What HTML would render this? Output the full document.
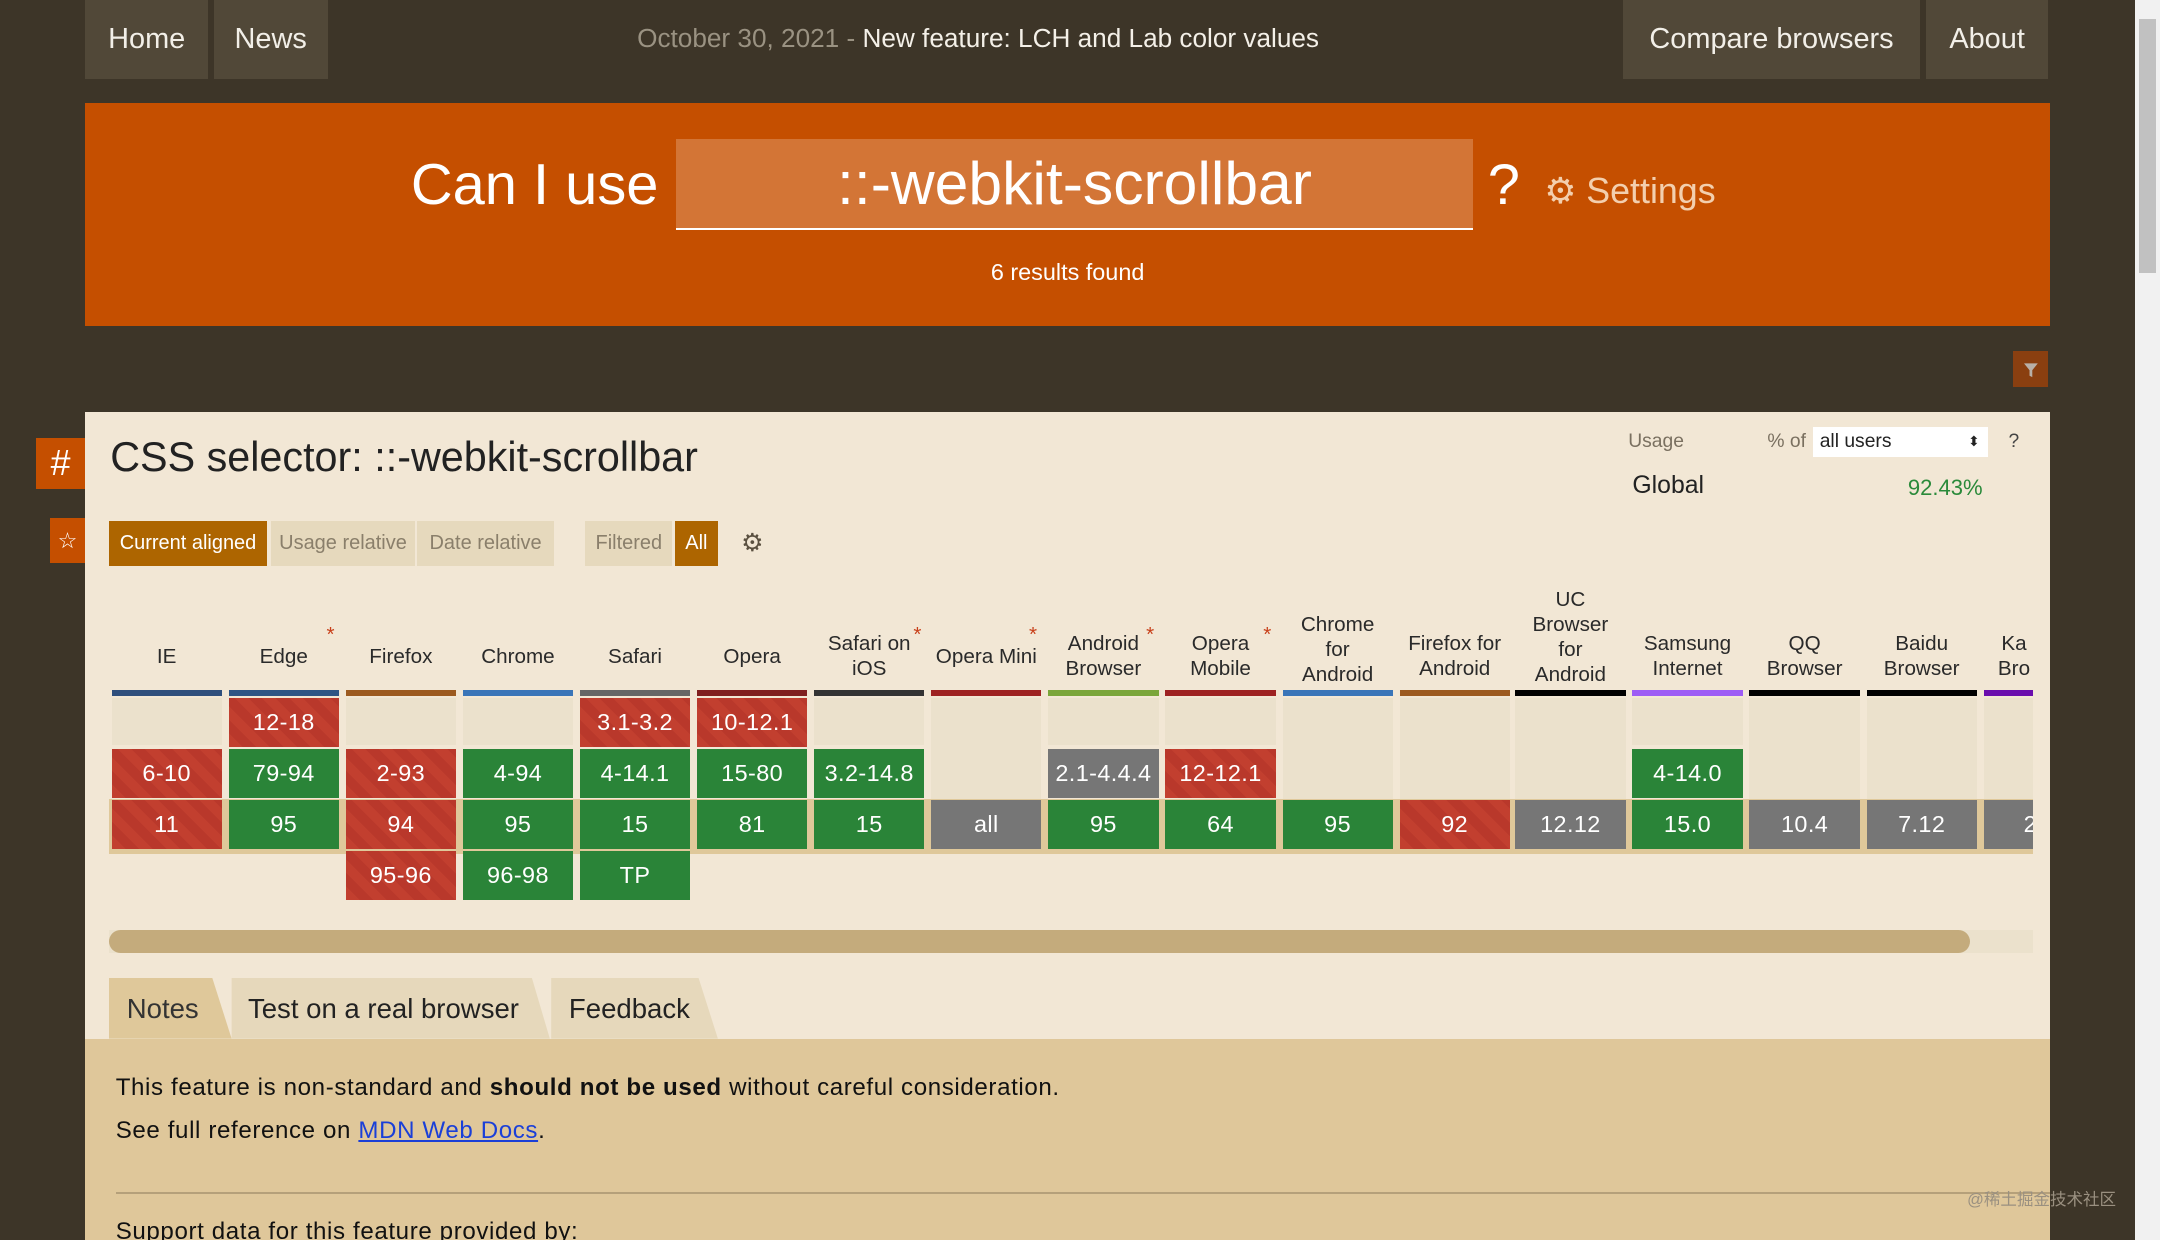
<!DOCTYPE html>
<html><head><meta charset="utf-8">
<style>
*{margin:0;padding:0;box-sizing:border-box}
html,body{width:2160px;height:1240px;overflow:hidden;background:#3e3629}
#w{zoom:1.377551;width:1568px;height:900px;position:relative;overflow:hidden;background:#3d3528;font-family:"Liberation Sans",sans-serif}
.a{position:absolute}
.nav{position:absolute;top:0;height:57px;background:#514838;color:#f2efe8;font-size:21px;line-height:57px;text-align:center}
.c{position:absolute;width:80px;height:35px;color:#fff;font-size:17px;line-height:35px;text-align:center;letter-spacing:.3px}
.r{background:#c23f2f repeating-linear-gradient(45deg,#c23f2f 0 7px,#b9382b 7px 14px)}
.g{background:#2a8438}
.y{background:#767676}
.e{position:absolute;width:80px;background:#ebe1cc}
.h{position:absolute;width:84px;text-align:center;font-size:15px;line-height:18px;color:#2a2a2a}
.bar{position:absolute;top:501px;width:80px;height:4px}
.st{color:#c8401a;font-size:15px;position:absolute}
.btn{position:absolute;top:378px;height:33px;line-height:33px;font-size:14.5px;text-align:center}
</style></head><body><div id="w">
<div class="a" style="right:0;top:0;width:18px;height:900px;background:#f1f1f1"></div>
<div class="a" style="right:3px;top:14px;width:12px;height:184px;background:#c1c1c1"></div>

<div class="nav" style="left:62px;width:89px">Home</div>
<div class="nav" style="left:155px;width:83px">News</div>
<div class="nav" style="left:1178px;width:216px">Compare browsers</div>
<div class="nav" style="left:1398px;width:89px">About</div>
<div class="a" style="left:0;width:1420px;text-align:center;top:17px;font-size:19px;color:#9a9282">October 30, 2021 - <span style="color:#f4f0e8">New feature: LCH and Lab color values</span></div>

<div class="a" style="left:62px;top:75px;width:1426px;height:162px;background:#c54f00"></div>
<div class="a" style="left:200px;width:278px;text-align:right;top:110px;font-size:42px;color:#fff">Can I use</div>
<div class="a" style="left:491px;top:101px;width:578px;height:66px;background:#d37536;border-bottom:2px solid #fff;color:#fff;font-size:44px;text-align:center;line-height:64px">::-webkit-scrollbar</div>
<div class="a" style="left:1080px;top:110px;font-size:42px;color:#fff">?</div>
<div class="a" style="left:1121px;top:124px;font-size:26px;color:#f3cfae">⚙ Settings</div>
<div class="a" style="left:0;width:1550px;text-align:center;top:188px;font-size:17px;color:#fff">6 results found</div>

<div class="a" style="left:1461px;top:255px;width:26px;height:26px;background:#8a3f10"><svg width="26" height="26"><path d="M8 9h10l-4 5v5l-2-1v-4z" fill="#b8b0a8"/></svg></div>

<div class="a" style="left:62px;top:299px;width:1426px;height:601px;background:#f2e7d5"></div>
<div class="a" style="left:26px;top:318px;width:36px;height:37px;background:#c54f00;color:#fff;font-size:26px;text-align:center;line-height:37px">#</div>
<div class="a" style="left:36px;top:376px;width:26px;height:33px;background:#c54f00;color:#fff;font-size:16px;text-align:center;line-height:33px">☆</div>
<div class="a" style="left:80px;top:315px;font-size:30px;color:#222">CSS selector: ::-webkit-scrollbar</div>

<div class="btn" style="left:79px;width:115px;background:#ad6500;color:#fff">Current aligned</div>
<div class="btn" style="left:197px;width:104px;background:#e6d9bd;color:#8a7f6b">Usage relative</div>
<div class="btn" style="left:303px;width:99px;background:#e6d9bd;color:#8a7f6b">Date relative</div>
<div class="btn" style="left:425px;width:63px;background:#e6d9bd;color:#8a7f6b">Filtered</div>
<div class="btn" style="left:490px;width:31px;background:#ad6500;color:#fff">All</div>
<div class="a" style="left:538px;top:383px;font-size:18px;color:#5a5040">⚙</div>

<div class="a" style="left:1182px;top:313px;font-size:14px;color:#7a7060">Usage</div>
<div class="a" style="left:1283px;top:313px;font-size:14px;color:#7a7060">% of</div>
<div class="a" style="left:1316px;top:310px;width:127px;height:22px;background:#fff;font-size:14px;line-height:22px;padding-left:5px;color:#222">all users<span style="position:absolute;right:6px;font-size:10px">⬍</span></div>
<div class="a" style="left:1458px;top:313px;font-size:14px;color:#444">?</div>
<div class="a" style="left:1185px;top:343px;font-size:18px;color:#222">Global</div>
<div class="a" style="left:1385px;top:345px;font-size:16px;color:#2a8a3a">92.43%</div>

<!-- headers -->
<div class="h" style="left:79px;top:468px">IE</div>
<div class="h" style="left:164px;top:468px">Edge</div><span class="st" style="left:237px;top:452px">*</span>
<div class="h" style="left:249px;top:468px">Firefox</div>
<div class="h" style="left:334px;top:468px">Chrome</div>
<div class="h" style="left:419px;top:468px">Safari</div>
<div class="h" style="left:504px;top:468px">Opera</div>
<div class="h" style="left:589px;top:459px">Safari on<br>iOS</div><span class="st" style="left:663px;top:452px">*</span>
<div class="h" style="left:674px;top:468px">Opera Mini</div><span class="st" style="left:747px;top:452px">*</span>
<div class="h" style="left:759px;top:459px">Android<br>Browser</div><span class="st" style="left:832px;top:452px">*</span>
<div class="h" style="left:844px;top:459px">Opera<br>Mobile</div><span class="st" style="left:917px;top:452px">*</span>
<div class="h" style="left:929px;top:445px">Chrome<br>for<br>Android</div>
<div class="h" style="left:1014px;top:459px">Firefox for<br>Android</div>
<div class="h" style="left:1098px;top:427px">UC<br>Browser<br>for<br>Android</div>
<div class="h" style="left:1183px;top:459px">Samsung<br>Internet</div>
<div class="h" style="left:1268px;top:459px">QQ<br>Browser</div>
<div class="h" style="left:1353px;top:459px">Baidu<br>Browser</div>
<div class="a" style="left:1440px;top:459px;width:36px;overflow:hidden;font-size:15px;line-height:18px;color:#2a2a2a;text-align:center;white-space:nowrap"><div style="width:80px;margin-left:-18px">Ka<br>Bro</div></div>

<div class="bar" style="left:81px;background:#2f4f7c"></div>
<div class="bar" style="left:166px;background:#2f5584"></div>
<div class="bar" style="left:251px;background:#9c5a1f"></div>
<div class="bar" style="left:336px;background:#3a75b8"></div>
<div class="bar" style="left:421px;background:#666"></div>
<div class="bar" style="left:506px;background:#801f1f"></div>
<div class="bar" style="left:591px;background:#333"></div>
<div class="bar" style="left:676px;background:#9e2222"></div>
<div class="bar" style="left:761px;background:#7aa53a"></div>
<div class="bar" style="left:846px;background:#9e2222"></div>
<div class="bar" style="left:931px;background:#3a75b8"></div>
<div class="bar" style="left:1016px;background:#9c5a1f"></div>
<div class="bar" style="left:1100px;background:#000"></div>
<div class="bar" style="left:1185px;background:#9d5cf5"></div>
<div class="bar" style="left:1270px;background:#000"></div>
<div class="bar" style="left:1355px;background:#000"></div>
<div class="bar" style="left:1440px;width:36px;background:#6a0dad"></div>

<div class="a" style="left:79px;top:580px;width:1397px;height:40px;background:#dfc89a"></div>

<!-- empty cells -->
<div class="e" style="left:81px;top:507px;height:34px"></div>
<div class="e" style="left:251px;top:507px;height:34px"></div>
<div class="e" style="left:336px;top:507px;height:34px"></div>
<div class="e" style="left:591px;top:507px;height:34px"></div>
<div class="e" style="left:676px;top:507px;height:73px"></div>
<div class="e" style="left:761px;top:507px;height:34px"></div>
<div class="e" style="left:846px;top:507px;height:34px"></div>
<div class="e" style="left:931px;top:507px;height:73px"></div>
<div class="e" style="left:1016px;top:507px;height:73px"></div>
<div class="e" style="left:1100px;top:507px;height:73px"></div>
<div class="e" style="left:1185px;top:507px;height:34px"></div>
<div class="e" style="left:1270px;top:507px;height:73px"></div>
<div class="e" style="left:1355px;top:507px;height:73px"></div>
<div class="e" style="left:1440px;top:507px;height:73px;width:36px"></div>

<!-- row1 -->
<div class="c r" style="left:166px;top:507px">12-18</div>
<div class="c r" style="left:421px;top:507px">3.1-3.2</div>
<div class="c r" style="left:506px;top:507px">10-12.1</div>
<!-- row2 -->
<div class="c r" style="left:81px;top:544px">6-10</div>
<div class="c g" style="left:166px;top:544px">79-94</div>
<div class="c r" style="left:251px;top:544px">2-93</div>
<div class="c g" style="left:336px;top:544px">4-94</div>
<div class="c g" style="left:421px;top:544px">4-14.1</div>
<div class="c g" style="left:506px;top:544px">15-80</div>
<div class="c g" style="left:591px;top:544px">3.2-14.8</div>
<div class="c y" style="left:761px;top:544px">2.1-4.4.4</div>
<div class="c r" style="left:846px;top:544px">12-12.1</div>
<div class="c g" style="left:1185px;top:544px">4-14.0</div>
<!-- current -->
<div class="c r" style="left:81px;top:581px">11</div>
<div class="c g" style="left:166px;top:581px">95</div>
<div class="c r" style="left:251px;top:581px">94</div>
<div class="c g" style="left:336px;top:581px">95</div>
<div class="c g" style="left:421px;top:581px">15</div>
<div class="c g" style="left:506px;top:581px">81</div>
<div class="c g" style="left:591px;top:581px">15</div>
<div class="c y" style="left:676px;top:581px">all</div>
<div class="c g" style="left:761px;top:581px">95</div>
<div class="c g" style="left:846px;top:581px">64</div>
<div class="c g" style="left:931px;top:581px">95</div>
<div class="c r" style="left:1016px;top:581px">92</div>
<div class="c y" style="left:1100px;top:581px">12.12</div>
<div class="c g" style="left:1185px;top:581px">15.0</div>
<div class="c y" style="left:1270px;top:581px">10.4</div>
<div class="c y" style="left:1355px;top:581px">7.12</div>
<div class="c y" style="left:1440px;top:581px;width:36px;text-align:left;padding-left:29px;overflow:hidden">2</div>
<!-- future -->
<div class="c r" style="left:251px;top:618px">95-96</div>
<div class="c g" style="left:336px;top:618px">96-98</div>
<div class="c g" style="left:421px;top:618px">TP</div>

<div class="a" style="left:79px;top:675px;width:1397px;height:17px;background:#ebe1cc"></div>
<div class="a" style="left:79px;top:675px;width:1351px;height:17px;background:#c4ab7c;border-radius:9px"></div>

<!-- tabs -->
<svg class="a" style="left:79px;top:710px" width="450" height="44">
<path d="M0 0H75L89 44H0Z" fill="#dfc89a"/>
<path d="M89 0H307L320 44H89Z" fill="#e6d8bb"/>
<path d="M321 0H428L442 44H321Z" fill="#e6d8bb"/>
</svg>
<div class="a" style="left:92px;top:721px;font-size:20px;color:#333">Notes</div>
<div class="a" style="left:180px;top:721px;font-size:20px;color:#222">Test on a real browser</div>
<div class="a" style="left:413px;top:721px;font-size:20px;color:#222">Feedback</div>

<div class="a" style="left:62px;top:754px;width:1426px;height:146px;background:#dfc79a"></div>
<div class="a" style="left:84px;top:780px;font-size:17.5px;letter-spacing:.45px;color:#111">This feature is non-standard and <b>should not be used</b> without careful consideration.</div>
<div class="a" style="left:84px;top:811px;font-size:17.5px;letter-spacing:.45px;color:#111">See full reference on <span style="color:#1a3fd8;text-decoration:underline">MDN Web Docs</span>.</div>
<div class="a" style="left:84px;top:865px;width:1404px;height:2px;background:#b5a07a"></div>
<div class="a" style="left:84px;top:884px;font-size:17.5px;letter-spacing:.45px;color:#111">Support data for this feature provided by:</div>
<div class="a" style="left:1428px;top:861px;font-size:12px;color:#9a9080;font-family:'Liberation Sans','Noto Sans CJK SC',sans-serif">@稀土掘金技术社区</div>
</div></body></html>
